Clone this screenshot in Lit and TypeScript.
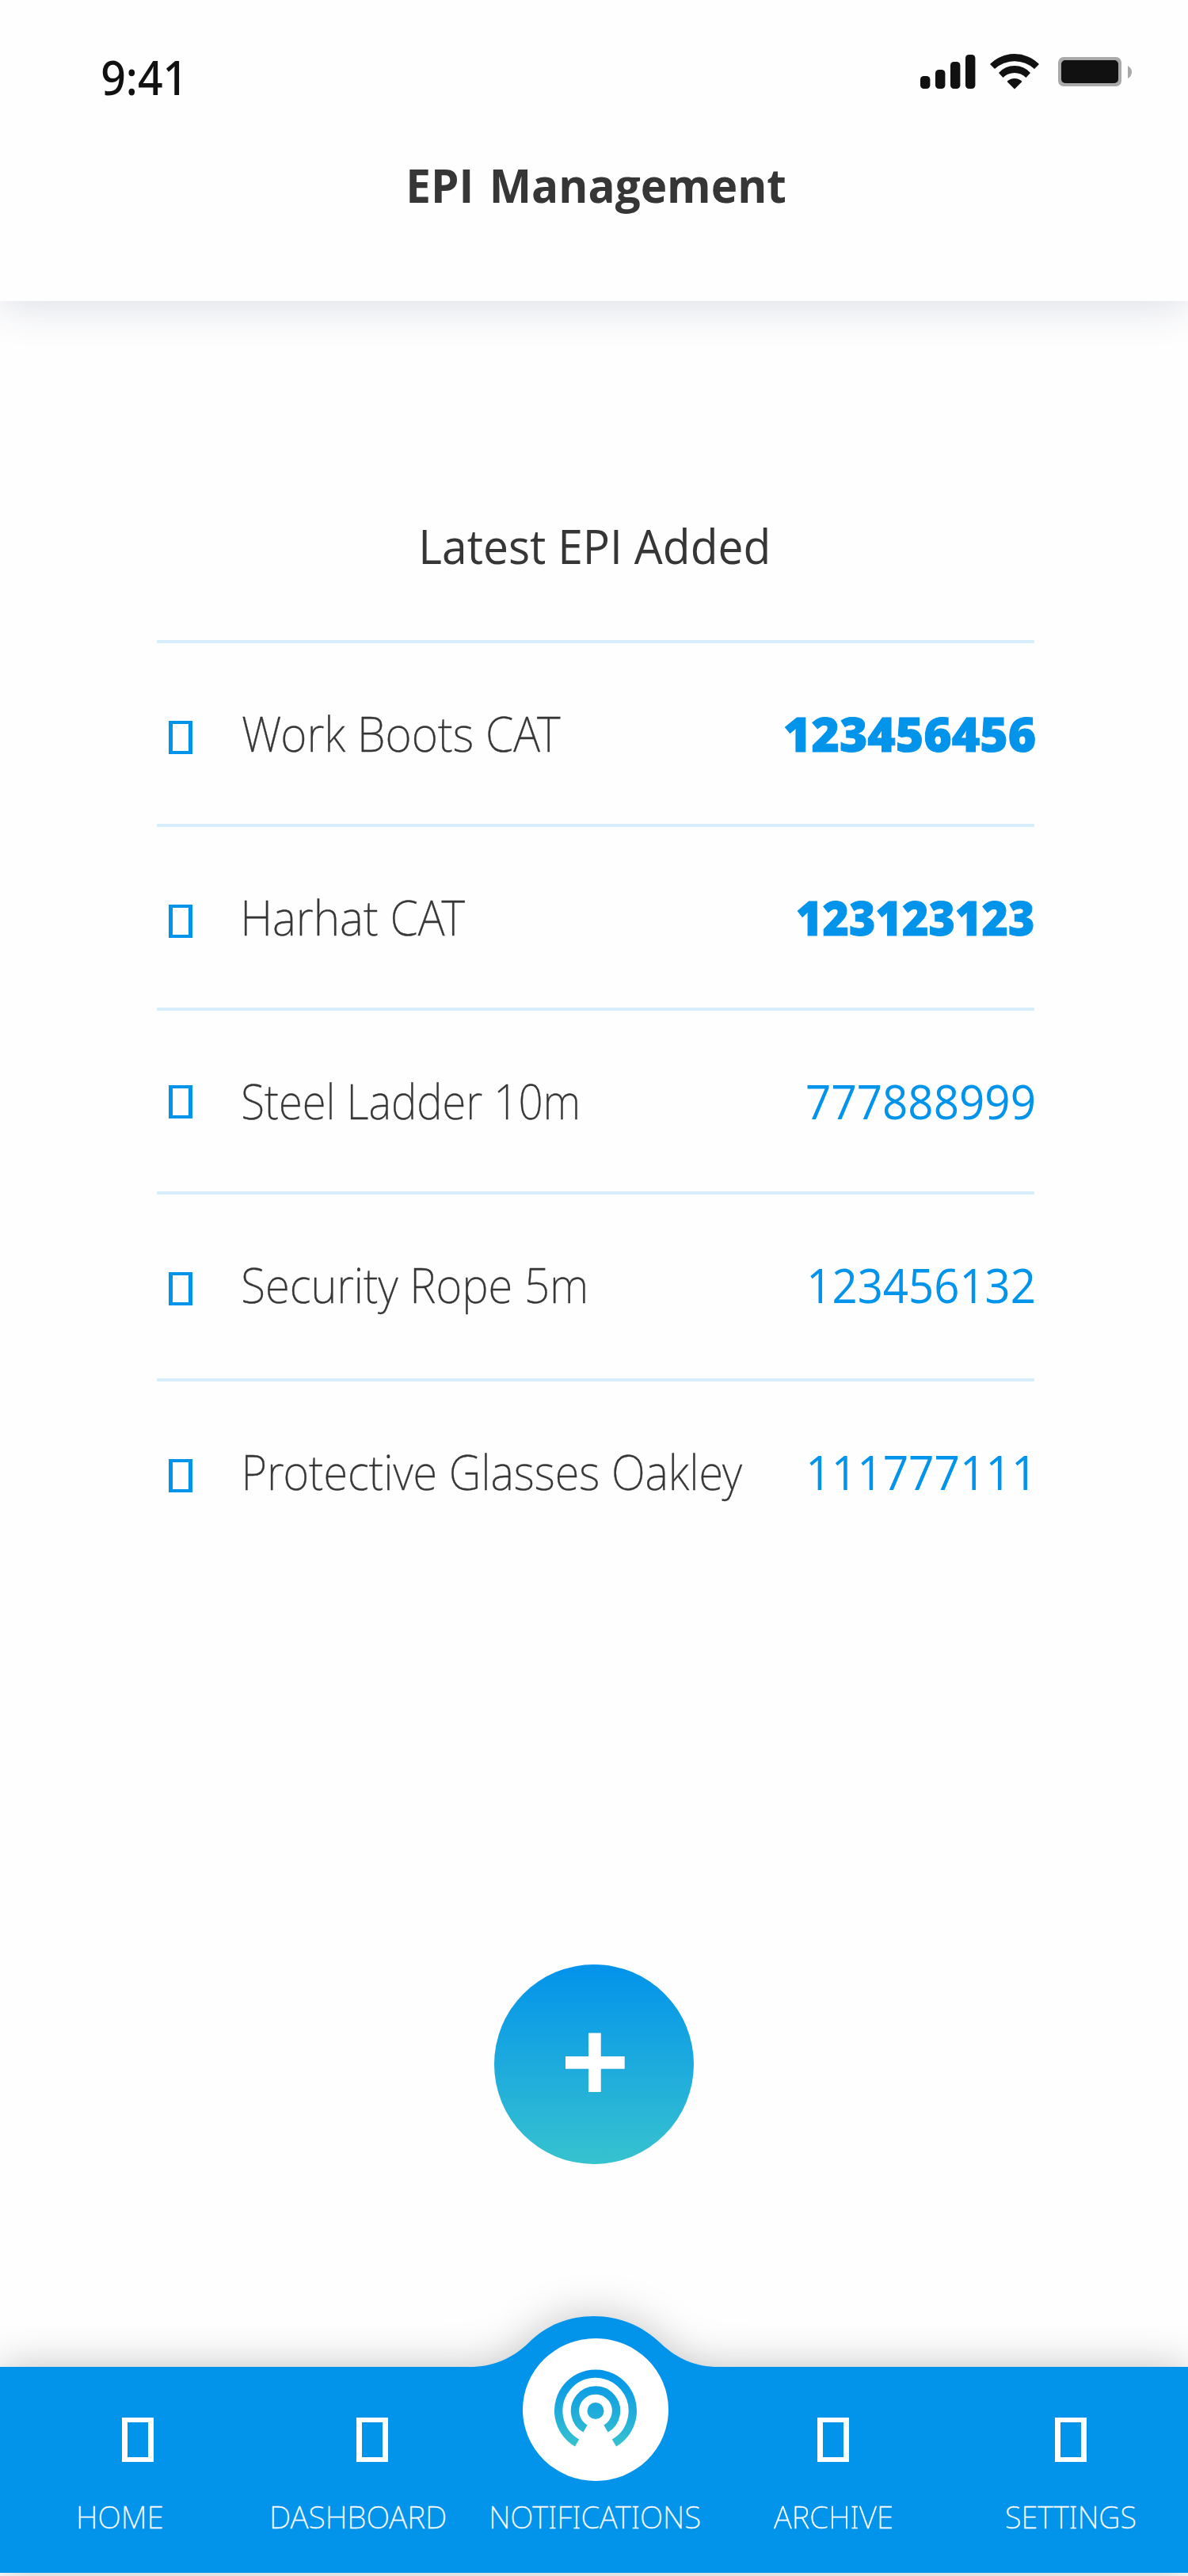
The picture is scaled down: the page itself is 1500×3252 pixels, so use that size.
import { LitElement, html, css, svg } from "lit";
import { customElement, property } from "lit/decorators.js";

/** A single line of text whose visible ink spans exactly `width` pixels. */
@customElement("fit-text")
export class FitText extends LitElement {
  @property() text = "";
  @property({ type: Number }) width = 100;

  static styles = css`
    :host {
      display: block;
      flex: none;
      white-space: nowrap;
    }
    .line {
      display: inline-block;
      transform-origin: 0 50%;
    }
  `;

  render() {
    return html`<span class="line">${this.text}</span>`;
  }

  updated() {
    this.style.width = `${this.width}px`;
    const line = this.renderRoot.querySelector<HTMLElement>(".line");
    const ctx = document.createElement("canvas").getContext("2d");
    if (!line || !ctx) return;
    const cs = getComputedStyle(line);
    ctx.font = `${cs.fontWeight} ${cs.fontSize} ${cs.fontFamily}`;
    const m = ctx.measureText(this.text);
    // Side bearings come from the canvas, the advance from the laid-out line.
    const before = -m.actualBoundingBoxLeft;
    const after = m.width - m.actualBoundingBoxRight;
    const k = this.width / (line.offsetWidth - before - after);
    line.style.transform = `translateX(${-before * k}px) scaleX(${k})`;
  }
}

interface Item {
  name: string;
  nameWidth: number;
  lead: number;
  code: string;
  codeWidth: number;
  trail: number;
  kind: string;
}

const ITEMS: Item[] = [
  { name: "Work Boots CAT", nameWidth: 401, lead: 0, code: "123456456", codeWidth: 315.5, trail: 0, kind: "strong" },
  { name: "Harhat CAT", nameWidth: 278.5, lead: 3, code: "123123123", codeWidth: 297, trail: 2, kind: "strong" },
  { name: "Steel Ladder 10m", nameWidth: 422.5, lead: 1, code: "777888999", codeWidth: 287, trail: 0.5, kind: "raised" },
  { name: "Security Rope 5m", nameWidth: 432.5, lead: 1, code: "123456132", codeWidth: 283, trail: 0.5, kind: "tall" },
  { name: "Protective Glasses Oakley", nameWidth: 627, lead: 4, code: "111777111", codeWidth: 276, trail: 8, kind: "" },
];

@customElement("epi-row")
export class EpiRow extends LitElement {
  @property({ attribute: false }) item!: Item;

  static styles = css`
    :host {
      display: block;
    }
    .row {
      display: flex;
      align-items: center;
      box-sizing: border-box;
      height: 232px;
      padding-left: 15px;
      border-top: 4px solid #d9eefb;
    }
    .row.tall {
      height: 236px;
      padding-bottom: 4px;
    }
    .box {
      box-sizing: border-box;
      width: 30px;
      height: 42px;
      margin: 10px 63px 0 0;
      border: solid #0293eb;
      border-width: 4px 5px;
    }
    .raised .box {
      margin-top: 2px;
    }
    .name {
      font: 200 60px/80px "Noto Sans", "Open Sans", sans-serif;
      color: #363636;
      -webkit-text-stroke: 0.4px #363636;
    }
    .code {
      margin-left: auto;
      font: 400 60px/80px "Open Sans", "Noto Sans", sans-serif;
      color: #0293eb;
    }
    .strong .code {
      font-family: "Noto Sans", "Open Sans", sans-serif;
      font-weight: 900;
      -webkit-text-stroke: 1px #0293eb;
    }
  `;

  render() {
    const i = this.item;
    return html`
      <div class="row ${i.kind}">
        <span class="box"></span>
        <fit-text class="name" style="margin-left:${i.lead}px" .text=${i.name} .width=${i.nameWidth}></fit-text>
        <fit-text class="code" style="margin-right:${i.trail}px" .text=${i.code} .width=${i.codeWidth}></fit-text>
      </div>
    `;
  }
}

@customElement("status-icons")
export class StatusIcons extends LitElement {
  static styles = css`
    :host {
      display: block;
    }
    svg {
      display: block;
    }
  `;

  render() {
    const bars = [
      [0, 28],
      [19, 20],
      [38, 10],
      [57, 1],
    ];
    return html`
      <svg width="268" height="46" viewBox="0 0 268 46" fill="#111">
        ${bars.map(([x, y]) => svg`<rect x=${x} y=${y} width="12.4" height=${44 - y} rx="4.5"></rect>`)}
        <g transform="translate(88 0)">
          <path d="M0 13A43.5 43.5 0 0 1 62 13L56 19A37 37 0 0 0 6 19Z"></path>
          <path d="M11 24A26.7 26.7 0 0 1 51 24L45.5 30A20.5 20.5 0 0 0 16.5 30Z"></path>
          <path d="M21.5 35A13.3 13.3 0 0 1 40.5 35L31 44.5Z"></path>
        </g>
        <rect x="174" y="4" width="80" height="37" rx="7" fill="#a9a9a9"></rect>
        <rect x="178" y="8" width="72" height="29" rx="5"></rect>
        <path d="M262 15Q267 18 267 23Q267 28 262 31Z" fill="#a9a9a9"></path>
      </svg>
    `;
  }
}

@customElement("nav-bar")
export class NavBar extends LitElement {
  static styles = css`
    :host {
      display: block;
      position: relative;
      height: 260px;
      margin-bottom: 4px;
    }
    .shape {
      position: absolute;
      left: 0;
      top: -64px;
      display: block;
      overflow: visible;
      filter: drop-shadow(0 0 26px rgba(0, 0, 0, 0.23));
    }
    .items {
      position: relative;
      display: grid;
      grid-template-columns: repeat(5, 300px);
      height: 260px;
    }
    .item {
      display: flex;
      flex-direction: column;
      align-items: center;
      padding: 64px 0 0 4px;
    }
    .box {
      box-sizing: border-box;
      width: 40px;
      height: 56px;
      border: solid #fff;
      border-width: 6px 7px;
      margin-bottom: 43px;
    }
    .home .box {
      margin-left: 44px;
    }
    .dashboard .box {
      margin-left: 36px;
    }
    .home .label,
    .dashboard .label {
      margin-left: 2px;
    }
    .label {
      font: 200 39.5px/52px "Noto Sans", "Open Sans", sans-serif;
      color: #fff;
      -webkit-text-stroke: 0.3px #fff;
    }
    .active {
      padding-top: 0;
    }
    .beacon {
      display: block;
      margin: -36px 0 19px;
    }
  `;

  private entry(id: string, label: string, width: number) {
    return html`
      <div class="item ${id}">
        <span class="box"></span>
        <fit-text class="label" .text=${label} .width=${width}></fit-text>
      </div>
    `;
  }

  render() {
    return html`
      <svg class="shape" width="1500" height="324" viewBox="0 0 1500 324">
        <path
          fill="#0293eb"
          d="M0 64H593C622 64 646 54 667 34C690 11 718 0 750 0C782 0 811 12 834 34C855 54 878 64 907 64H1500V324H0Z"
        ></path>
      </svg>
      <div class="items">
        ${this.entry("home", "HOME", 105.5)} ${this.entry("dashboard", "DASHBOARD", 219)}
        <div class="item active">
          <svg class="beacon" width="184" height="180" viewBox="0 0 184 180">
            <defs>
              <linearGradient id="g" gradientUnits="userSpaceOnUse" x1="0" y1="40" x2="0" y2="136">
                <stop offset="0" stop-color="#0293eb"></stop>
                <stop offset="1" stop-color="#37c2cf"></stop>
              </linearGradient>
            </defs>
            <ellipse cx="92" cy="90" rx="92" ry="90" fill="#fff"></ellipse>
            <g fill="none" stroke="url(#g)" stroke-width="10.4">
              <path d="M68.6 132A46.8 46.8 0 1 1 115.4 132"></path>
              <path d="M79 114A26 26 0 1 1 105 114"></path>
            </g>
            <circle cx="92" cy="91.5" r="10.5" fill="url(#g)"></circle>
          </svg>
          <fit-text class="label" .text=${"NOTIFICATIONS"} .width=${263}></fit-text>
        </div>
        ${this.entry("archive", "ARCHIVE", 149.5)} ${this.entry("settings", "SETTINGS", 162)}
      </div>
    `;
  }
}

@customElement("app-root")
export class AppRoot extends LitElement {
  static styles = css`
    :host {
      display: block;
      width: 1500px;
      height: 3252px;
      overflow: hidden;
      background: #fefefe;
      font-family: "Open Sans", "Noto Sans", sans-serif;
    }
    .page {
      display: flex;
      flex-direction: column;
      height: 3252px;
    }
    .header {
      box-sizing: border-box;
      height: 380px;
      flex: none;
      background: #fefefe;
      box-shadow: 0 6px 50px rgba(36, 47, 99, 0.16);
    }
    .status {
      display: flex;
      justify-content: space-between;
      align-items: flex-start;
      padding: 57px 70px 0 129px;
    }
    .time {
      font: 500 60px/80px "Noto Sans", "Open Sans", sans-serif;
      color: #111;
    }
    .icons {
      margin-top: 11px;
    }
    .title {
      margin: 56px auto 0 516.7px;
      font-weight: 700;
      font-size: 59.5px;
      line-height: 80px;
      word-spacing: 5px;
      color: #363636;
    }
    .body {
      display: flex;
      flex-direction: column;
      align-items: center;
      flex: 1;
    }
    .subtitle {
      margin: 269px 0 79px 1.5px;
      font-size: 60px;
      line-height: 80px;
      color: #363636;
    }
    .list {
      width: 1108px;
      margin-left: 4px;
    }
    .add {
      display: flex;
      width: 252px;
      height: 252px;
      margin-top: 508px;
      border-radius: 50%;
      background: linear-gradient(#0293eb, #37c2cf);
    }
    .add svg {
      margin: 86px 0 0 90px;
    }
  `;

  render() {
    return html`
      <div class="page">
        <header class="header">
          <div class="status">
            <fit-text class="time" .text=${"9:41"} .width=${97.5}></fit-text>
            <status-icons class="icons"></status-icons>
          </div>
          <fit-text class="title" .text=${"EPI Management"} .width=${474}></fit-text>
        </header>
        <main class="body">
          <fit-text class="subtitle" .text=${"Latest EPI Added"} .width=${436}></fit-text>
          <section class="list">${ITEMS.map((i) => html`<epi-row .item=${i}></epi-row>`)}</section>
          <div class="add">
            <svg width="76" height="76" viewBox="0 0 76 76" fill="none" stroke="#fff" stroke-width="15.7">
              <path d="M0 37.8H74.7M36.9 .5V75"></path>
            </svg>
          </div>
        </main>
        <nav-bar></nav-bar>
      </div>
    `;
  }
}
